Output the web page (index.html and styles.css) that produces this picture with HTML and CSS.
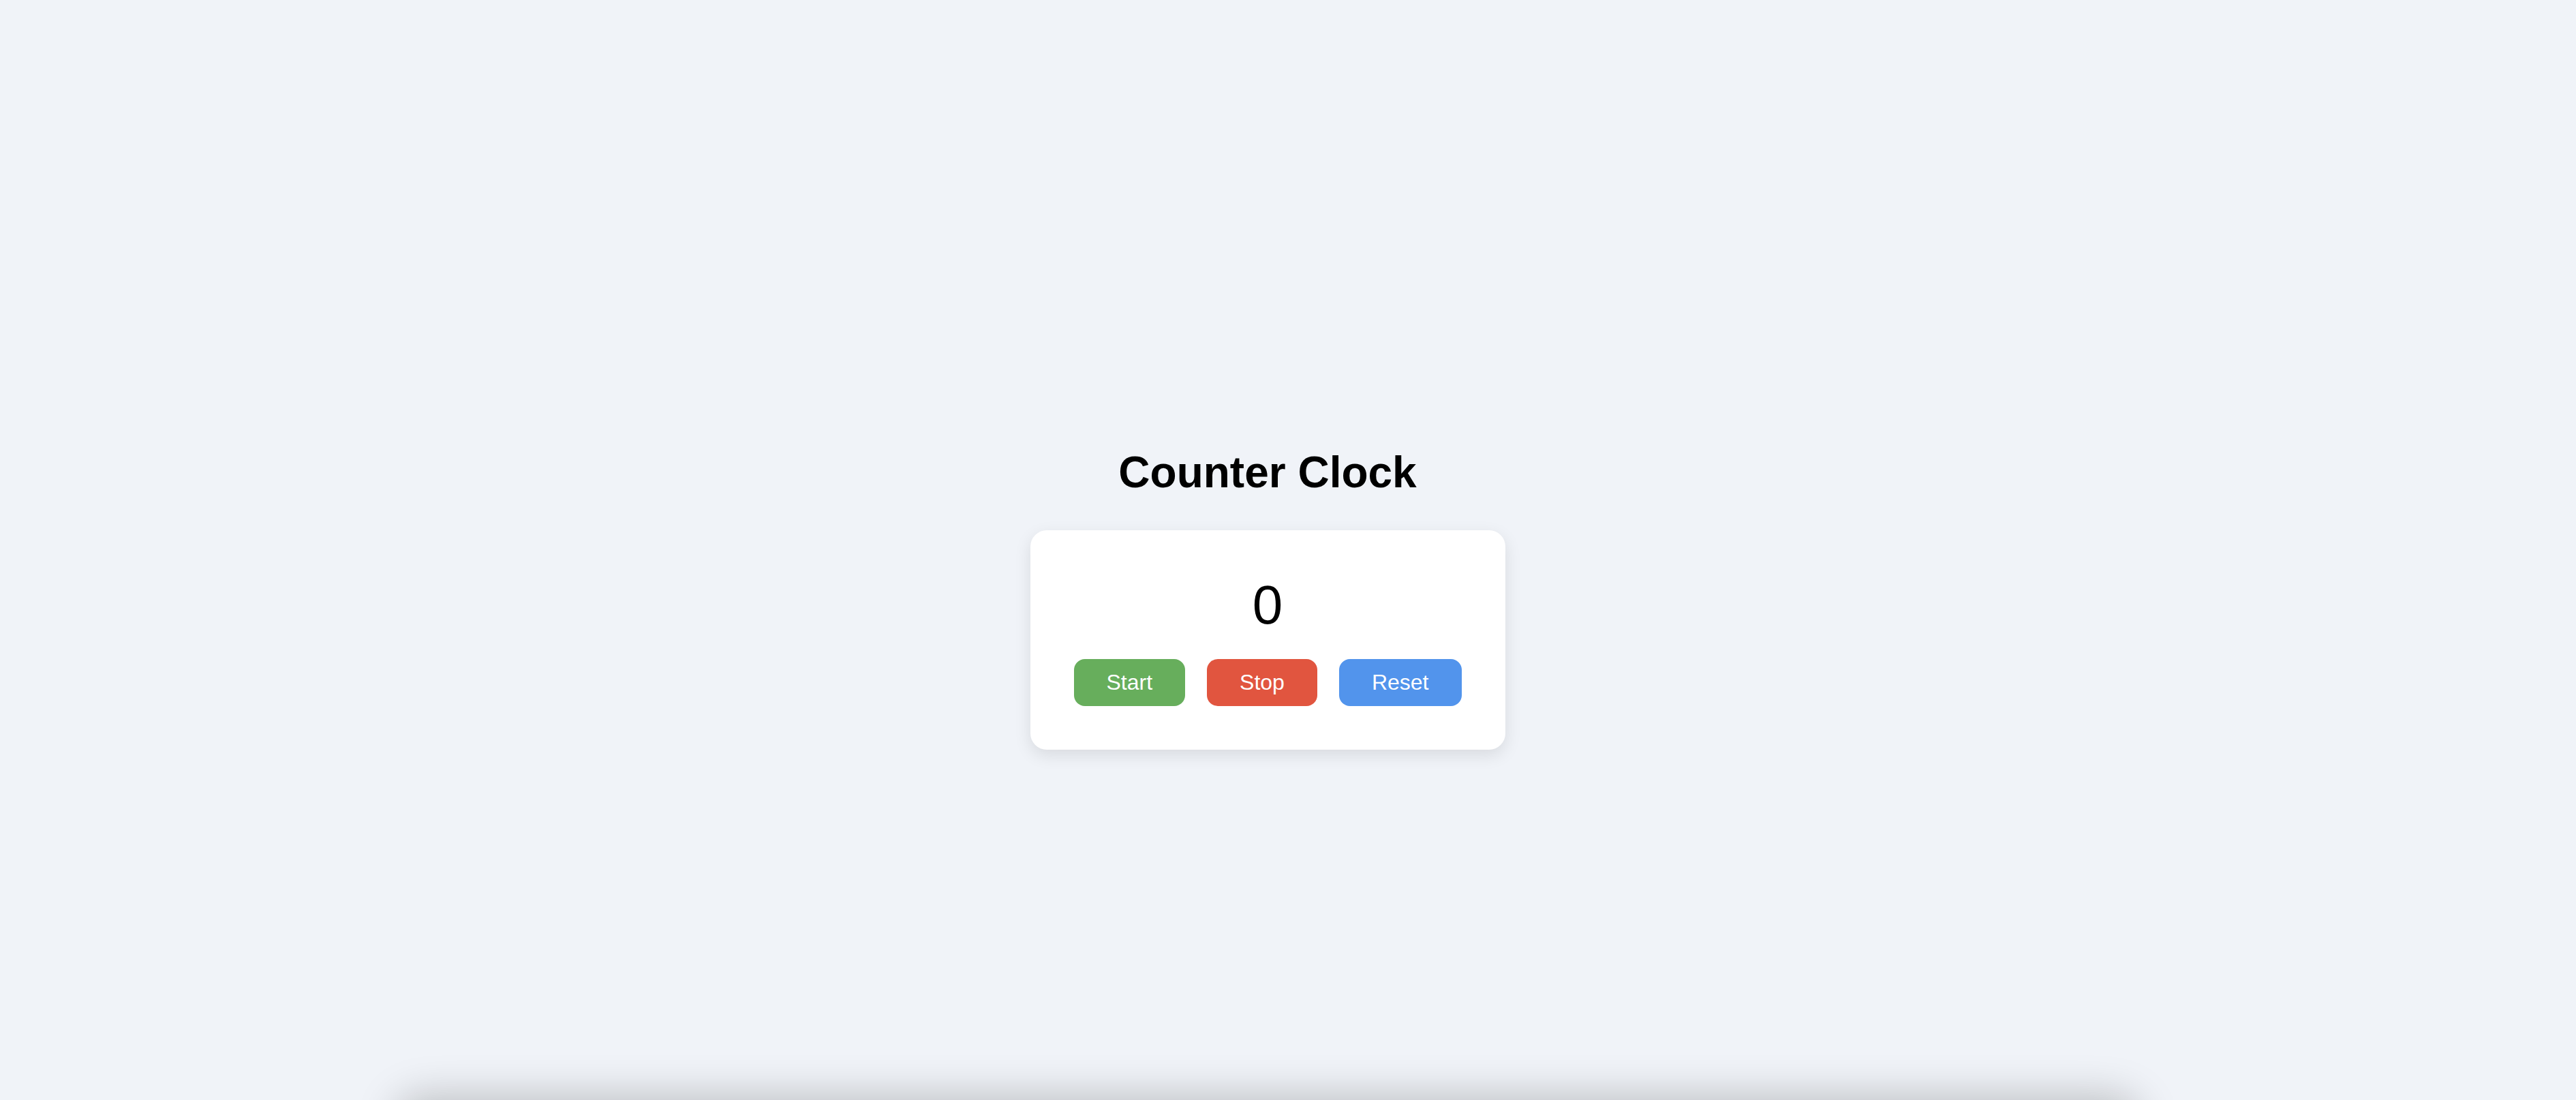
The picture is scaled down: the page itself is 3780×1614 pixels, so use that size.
FILE: index.html
```html
<!DOCTYPE html>
<html lang="en">
<head>
<meta charset="utf-8">
<title>Counter Clock</title>
<link rel="stylesheet" href="styles.css">
</head>
<body>
<main class="app">
  <h1 class="title">Counter Clock</h1>
  <section class="card">
    <div class="count">0</div>
    <div class="controls">
      <button class="btn btn-start">Start</button>
      <button class="btn btn-stop">Stop</button>
      <button class="btn btn-reset">Reset</button>
    </div>
  </section>
  <div class="panel"></div>
</main>
</body>
</html>
```
FILE: styles.css
```css
html, body {
  background: #f0f3f8;
}
body {
  margin: 0 60px 0 0;
  height: 1614px;
  overflow: hidden;
  font-family: "Liberation Sans", Arial, Helvetica, sans-serif;
  color: #000;
}
.app {
  display: flex;
  flex-direction: column;
  align-items: center;
  padding-top: 656px;
}
.title {
  margin: 0 0 48px;
  font-size: 64px;
  line-height: 74px;
  font-weight: 700;
}
.card {
  background: #fff;
  border-radius: 24px;
  padding: 64px;
  box-shadow: 0 8px 24px rgba(0, 0, 0, 0.1);
  display: flex;
  flex-direction: column;
  align-items: center;
}
.count {
  font-size: 80px;
  line-height: 92px;
  margin-bottom: 33px;
}
.controls {
  display: flex;
  gap: 32px;
}
.btn {
  font-family: "Liberation Sans", Arial, Helvetica, sans-serif;
  font-size: 32px;
  line-height: 37px;
  padding: 16px 48px;
  border: none;
  border-radius: 16px;
  color: #fff;
}
.btn-start { background: #67ae5c; }
.btn-stop { background: #e1553f; }
.btn-reset { background: #5294ec; }
.panel {
  margin-top: 518px;
  width: 2560px;
  height: 300px;
  background: #f0f3f8;
  border-radius: 40px;
  box-shadow: 0 -10px 60px rgba(0, 0, 0, 0.22);
}
```
